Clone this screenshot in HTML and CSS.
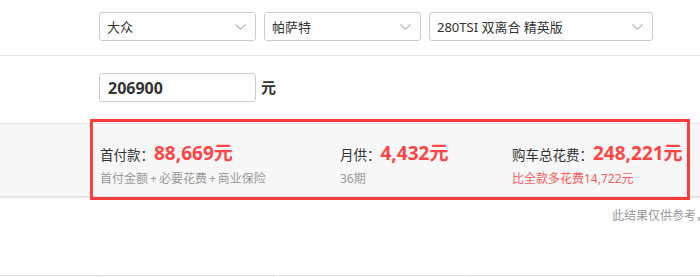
FILE: index.html
```html
<!DOCTYPE html>
<html lang="zh-CN">
<head>
  <meta charset="UTF-8">
  <meta name="viewport" content="width=device-width, initial-scale=1.0">
  <title>购车计算器</title>
  <link rel="stylesheet" href="styles.css">
</head>
<body>
  <div class="page">
    <div class="row row-car">
      <div class="select select-brand">
        <span>大众</span>
        <svg class="arrow" width="11" height="6" viewBox="0 0 11 6"><path d="M0.5 0.5 L5.5 5.2 L10.5 0.5" fill="none" stroke="#bbb" stroke-width="1.2"/></svg>
      </div>
      <div class="select select-series">
        <span>帕萨特</span>
        <svg class="arrow" width="11" height="6" viewBox="0 0 11 6"><path d="M0.5 0.5 L5.5 5.2 L10.5 0.5" fill="none" stroke="#bbb" stroke-width="1.2"/></svg>
      </div>
      <div class="select select-model">
        <span>280TSI 双离合 精英版</span>
        <svg class="arrow" width="11" height="6" viewBox="0 0 11 6"><path d="M0.5 0.5 L5.5 5.2 L10.5 0.5" fill="none" stroke="#bbb" stroke-width="1.2"/></svg>
      </div>
    </div>

    <div class="row row-price">
      <input class="price-input" type="text" value="206900">
      <span class="unit">元</span>
    </div>

    <div class="result">
      <div class="result-item item-first">
        <div class="result-main"><span class="label">首付款：</span><span class="num">88,669元</span></div>
        <div class="result-sub">首付金额<span class="plus">+</span>必要花费<span class="plus">+</span>商业保险</div>
      </div>
      <div class="result-item item-month">
        <div class="result-main"><span class="label">月供：</span><span class="num">4,432元</span></div>
        <div class="result-sub">36期</div>
      </div>
      <div class="result-item item-total">
        <div class="result-main"><span class="label">购车总花费：</span><span class="num">248,221元</span></div>
        <div class="result-sub red">比全款多花费14,722元</div>
      </div>
    </div>

    <div class="note">此结果仅供参考，</div>

    <div class="table-head">
      <div class="th th-a"></div>
      <div class="th th-b"></div>
      <div class="th th-c"></div>
      <div class="th th-d"></div>
    </div>

    <div class="highlight"></div>
  </div>
</body>
</html>
```

FILE: styles.css
```css
html, body {
  margin: 0;
  padding: 0;
  background: #fff;
  overflow: hidden;
}

body {
  font-family: "Noto Sans", "Noto Sans CJK SC", sans-serif;
  color: #333;
}

.page {
  position: relative;
  width: 700px;
  height: 277px;
  overflow: hidden;
}

.row {
  display: flex;
  align-items: center;
  padding-left: 99px;
}

.row-car {
  height: 56px;
  padding-top: 12px;
  align-items: flex-start;
  box-sizing: border-box;
  border-bottom: 1px solid #e5e5e5;
  gap: 8px;
}

.select {
  height: 29px;
  box-sizing: border-box;
  border: 1px solid #ccc;
  border-radius: 3px;
  display: flex;
  align-items: center;
  justify-content: space-between;
  padding: 0 9px 0 7px;
  font-size: 13px;
  color: #333;
  background: #fff;
}

.select-brand,
.select-series {
  width: 157px;
}

.select-model {
  width: 224px;
}

.arrow {
  display: block;
}

.row-price {
  height: 67px;
  padding-top: 17px;
  align-items: flex-start;
  box-sizing: border-box;
}

.price-input {
  width: 157px;
  height: 29px;
  box-sizing: border-box;
  border: 1px solid #ccc;
  border-radius: 3px;
  padding: 0 8px;
  font-family: "Noto Sans", "Noto Sans CJK SC", sans-serif;
  font-size: 16px;
  font-weight: bold;
  color: #333;
  outline: none;
}

.unit {
  margin-left: 5px;
  line-height: 29px;
  font-size: 15px;
  font-weight: bold;
}

.result {
  display: flex;
  height: 75px;
  box-sizing: border-box;
  background: #f7f7f7;
  border-top: 1px solid #e5e5e5;
  border-bottom: 2px solid #e5e5e5;
  padding-top: 14px;
  padding-left: 100px;
}

.result-item {
  display: flex;
  flex-direction: column;
}

.item-first {
  width: 240px;
}

.item-month {
  width: 172px;
}

.result-main {
  display: flex;
  align-items: baseline;
  height: 26px;
}

.label {
  font-size: 13.5px;
  color: #333;
}

.num {
  font-size: 19px;
  font-weight: bold;
  color: #ff4545;
}

.result-sub {
  margin-top: 5px;
  font-size: 12px;
  color: #999;
}

.result-sub .plus {
  margin: 0 2px;
}

.result-sub.red {
  color: #ff5b5b;
}

.note {
  padding: 8px 0 0 612px;
  height: 38px;
  box-sizing: border-box;
  white-space: nowrap;
  font-size: 12px;
  color: #999;
}

.table-head {
  display: flex;
  margin-top: 39px;
  border-top: 1px solid #e5e5e5;
  height: 2px;
}

.th {
  height: 2px;
}

.th-a { width: 98px; }
.th-b { width: 174px; border-left: 1px solid #ddd; }
.th-c { width: 197px; border-left: 1px solid #ddd; }
.th-d { flex: 1; border-left: 1px solid #ddd; }

.highlight {
  position: absolute;
  left: 90px;
  top: 119px;
  width: 600px;
  height: 81px;
  box-sizing: border-box;
  border: 3px solid #ff3b3b;
  pointer-events: none;
}
```
